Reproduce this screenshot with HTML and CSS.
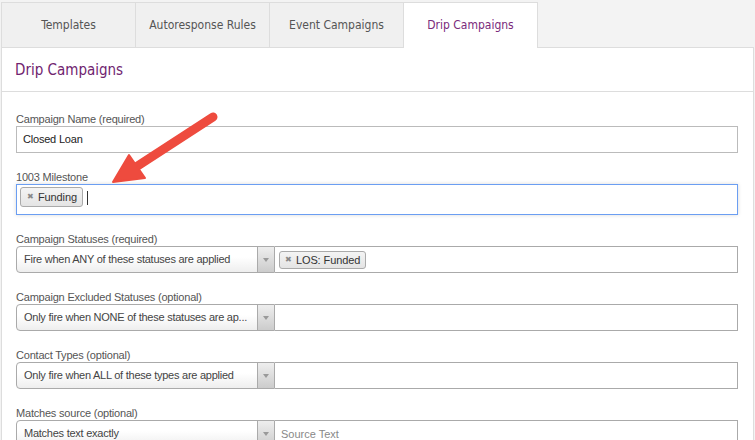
FILE: index.html
```html
<!DOCTYPE html>
<html lang="en">
<head>
    <meta charset="UTF-8">
    <title>Drip Campaigns</title>
    <link rel="stylesheet" href="styles.css">
</head>
<body>
    <!-- Tabs -->
    <div class="tabs">
        <div class="tab">Templates</div>
        <div class="tab">Autoresponse Rules</div>
        <div class="tab">Event Campaigns</div>
        <div class="tab active">Drip Campaigns</div>
    </div>

    <div class="panel">
        <div class="panel-header">Drip Campaigns</div>

        <div class="form">
            <div class="field">
                <label>Campaign Name (required)</label>
                <div class="input">Closed Loan</div>
            </div>

            <div class="field">
                <label>1003 Milestone</label>
                <div class="input tags focused">
                    <span class="tag big"><span class="x">&#10006;</span>Funding</span>
                    <span class="caret"></span>
                </div>
            </div>

            <div class="field">
                <label>Campaign Statuses (required)</label>
                <div class="combo">
                    <div class="select">
                        <span class="select-text">Fire when ANY of these statuses are applied</span>
                        <span class="select-arrow"></span>
                    </div>
                    <div class="combo-input">
                        <span class="tag"><span class="x">&#10006;</span>LOS: Funded</span>
                    </div>
                </div>
            </div>

            <div class="field">
                <label>Campaign Excluded Statuses (optional)</label>
                <div class="combo">
                    <div class="select">
                        <span class="select-text">Only fire when NONE of these statuses are ap...</span>
                        <span class="select-arrow"></span>
                    </div>
                    <div class="combo-input"></div>
                </div>
            </div>

            <div class="field">
                <label>Contact Types (optional)</label>
                <div class="combo">
                    <div class="select">
                        <span class="select-text">Only fire when ALL of these types are applied</span>
                        <span class="select-arrow"></span>
                    </div>
                    <div class="combo-input"></div>
                </div>
            </div>

            <div class="field">
                <label>Matches source (optional)</label>
                <div class="combo">
                    <div class="select">
                        <span class="select-text">Matches text exactly</span>
                        <span class="select-arrow"></span>
                    </div>
                    <div class="combo-input placeholder">Source Text</div>
                </div>
            </div>
        </div>
    </div>

    <!-- annotation arrow -->
    <svg class="arrow" width="140" height="90" viewBox="0 0 140 90">
        <line x1="121" y1="11" x2="44" y2="61" stroke="#ee4b3e" stroke-width="9" stroke-linecap="round"/>
        <polygon points="21,76 37,49 53,72" fill="#ee4b3e" stroke="#ee4b3e" stroke-width="2" stroke-linejoin="round"/>
    </svg>
</body>
</html>
```

FILE: styles.css
```css
body {
    margin: 0;
    background: #f3f3f3;
    font-family: "Liberation Sans", Arial, sans-serif;
    color: #444;
    overflow: hidden;
}

.tabs {
    display: flex;
    padding-top: 2px;
    margin-left: 1px;
}

.tab {
    width: 133px;
    height: 44px;
    line-height: 44px;
    text-align: center;
    background: #f0f0f0;
    border: 1px solid #ddd;
    border-bottom: none;
    margin-right: -1px;
    font-family: "DejaVu Sans Condensed", "DejaVu Sans", sans-serif;
    font-stretch: condensed;
    font-size: 12px;
    color: #555;
}

.tab.active {
    background: #fff;
    color: #7a2b7c;
    height: 45px;
    margin-bottom: -1px;
    position: relative;
    z-index: 1;
}

.panel {
    margin-left: 1px;
    width: 753px;
    box-sizing: border-box;
    background: #fff;
    border: 1px solid #ddd;
    border-bottom: none;
    height: 400px;
}

.panel-header {
    height: 43px;
    line-height: 44px;
    padding-left: 13px;
    border-bottom: 1px solid #ddd;
    font-family: "DejaVu Sans Condensed", "DejaVu Sans", sans-serif;
    font-stretch: condensed;
    font-size: 15px;
    color: #70246f;
}

.form {
    padding: 20px 15px 0 14px;
}

.field {
    margin-bottom: 17px;
}

label {
    display: block;
    height: 14px;
    font-size: 11px;
    line-height: 14px;
    letter-spacing: -0.2px;
    color: #555;
}

.input {
    height: 27px;
    box-sizing: border-box;
    border: 1px solid #bbb;
    padding: 0 6px;
    font-size: 11px;
    line-height: 25px;
    letter-spacing: -0.2px;
    color: #222;
}

.input.tags {
    height: 31px;
    display: flex;
    align-items: flex-start;
    padding: 2px 3px 0;
}

.input.focused {
    border-color: #6b9ef2;
    box-shadow: 0 0 4px rgba(0, 0, 0, 0.15);
}

.caret {
    width: 1px;
    height: 14px;
    margin-top: 4px;
    background: #333;
    margin-left: 4px;
}

.tag {
    display: inline-flex;
    align-items: center;
    height: 18px;
    box-sizing: border-box;
    padding: 0 5px 0 5px;
    border: 1px solid #aaa;
    border-radius: 3px;
    background: linear-gradient(#f4f4f4, #e4e4e4);
    font-size: 11px;
    letter-spacing: -0.1px;
    color: #333;
    line-height: 16px;
}

.tag.big {
    height: 20px;
    padding: 0 5px 0 6px;
}

.tag .x {
    font-size: 8px;
    color: #888;
    margin-right: 4px;
}

.combo {
    display: flex;
    height: 27px;
}

.select {
    width: 259px;
    display: flex;
    box-sizing: border-box;
    border: 1px solid #aaa;
    border-radius: 4px 0 0 4px;
    background: linear-gradient(#fff 40%, #eee);
}

.select-text {
    flex: 1;
    padding-left: 7px;
    font-size: 11px;
    line-height: 25px;
    letter-spacing: -0.25px;
    color: #444;
    white-space: nowrap;
}

.select-arrow {
    width: 16px;
    border-left: 1px solid #aaa;
    background: linear-gradient(#eee, #ccc);
    display: flex;
    justify-content: center;
    align-items: center;
}

.select-arrow::after {
    content: "";
    border-left: 3px solid transparent;
    border-right: 3px solid transparent;
    border-top: 4px solid #999;
}

.combo-input {
    flex: 1;
    box-sizing: border-box;
    border: 1px solid #aaa;
    border-left: none;
    display: flex;
    align-items: center;
    padding: 0 4px;
    font-size: 11px;
}

.combo-input.placeholder {
    color: #888;
    padding-left: 6px;
}

.arrow {
    position: absolute;
    left: 92px;
    top: 106px;
}
```
